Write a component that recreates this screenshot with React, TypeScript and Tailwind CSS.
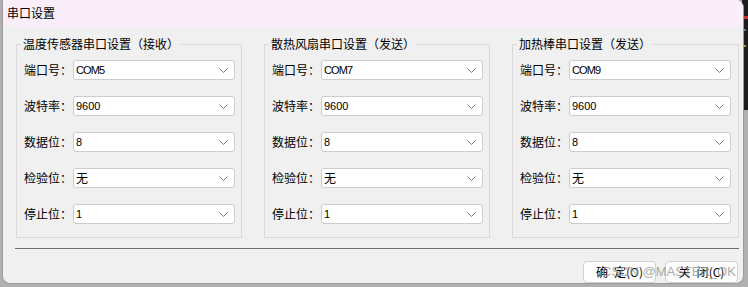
import React from "react";

const FONT = "font-['Microsoft_YaHei_UI','Noto_Sans_CJK_SC',sans-serif]";

type Row = { label: string; value: string; mono?: boolean };

const groups: { title: string; rows: Row[] }[] = [
  {
    title: "温度传感器串口设置（接收）",
    rows: [
      { label: "端口号：", value: "COM5", mono: true },
      { label: "波特率：", value: "9600" },
      { label: "数据位：", value: "8" },
      { label: "检验位：", value: "无" },
      { label: "停止位：", value: "1" },
    ],
  },
  {
    title: "散热风扇串口设置（发送）",
    rows: [
      { label: "端口号：", value: "COM7", mono: true },
      { label: "波特率：", value: "9600" },
      { label: "数据位：", value: "8" },
      { label: "检验位：", value: "无" },
      { label: "停止位：", value: "1" },
    ],
  },
  {
    title: "加热棒串口设置（发送）",
    rows: [
      { label: "端口号：", value: "COM9", mono: true },
      { label: "波特率：", value: "9600" },
      { label: "数据位：", value: "8" },
      { label: "检验位：", value: "无" },
      { label: "停止位：", value: "1" },
    ],
  },
];

function Chevron() {
  return (
    <svg width="9" height="5" viewBox="0 0 9 5" className="shrink-0">
      <polyline points="0.5,0.5 4.5,4.5 8.5,0.5" fill="none" stroke="#7c7c7c" strokeWidth="1" />
    </svg>
  );
}

function Combo({ value, mono }: { value: string; mono?: boolean }) {
  return (
    <div className="flex h-[20px] w-[162px] items-center justify-between rounded-[3px] border border-[#cdcdcd] bg-white pl-[2px] pr-[6px]">
      <span
        className={
          mono
            ? "font-['Liberation_Sans',sans-serif] text-[11px] leading-[18px] tracking-[-0.9px] text-black"
            : value === "无"
            ? `${FONT} text-[12px] leading-[18px] text-black`
            : "font-['Liberation_Sans',sans-serif] text-[11px] leading-[18px] text-black"
        }
      >
        {value}
      </span>
      <Chevron />
    </div>
  );
}

function Group({ title, rows, wide }: { title: string; rows: Row[]; wide?: boolean }) {
  return (
    <fieldset
      className={`${wide ? "w-[227px]" : "w-[226px]"} border border-[#d9d9d9] pl-[7px] pr-[5px] pt-[8px] pb-[13px]`}
    >
      <legend className={`${FONT} -ml-[3px] px-[2px] text-[12px] leading-[16px] text-black`}>{title}</legend>
      <div className="flex flex-col gap-[16px]">
        {rows.map((r) => (
          <div key={r.label} className="flex items-center">
            <span className={`${FONT} w-[49px] text-[12px] leading-[16px] text-black`}>{r.label}</span>
            <Combo value={r.value} mono={r.mono} />
          </div>
        ))}
      </div>
    </fieldset>
  );
}

function Btn({ a, b, k }: { a: string; b: string; k: string }) {
  return (
    <div
      className={`${FONT} flex h-[22px] w-[73px] items-center justify-center rounded-[4px] border border-[#d0d0d0] bg-[#fdfdfd] text-[12px] leading-[16px] text-black`}
    >
      <span className="mr-[6px]">{a}</span>
      <span>{b}</span>
      <span>({k})</span>
    </div>
  );
}

export default function App() {
  return (
    <div className="relative h-[287px] w-[748px] overflow-hidden bg-[#b0b0b0]">
      <div className="absolute right-0 top-0 h-[110px] w-[6px] bg-[#1c1c1c]">
        <div className="mt-[16px] h-[3px] w-[6px] bg-[#c0392b]" />
        <div className="mt-[10px] h-[2px] w-[4px] bg-[#5b7bb5]" />
        <div className="mt-[14px] h-[2px] w-[4px] bg-[#c08a3e]" />
      </div>
      <div className="absolute left-[2px] top-0 flex h-[284px] w-[742px] flex-col overflow-hidden rounded-b-[8px] rounded-tr-[8px] border-b border-l border-r border-[#9c9c9c] bg-[#f0f0f0]">
        <div className="flex h-[26px] shrink-0 items-center bg-[#f9eef9] pl-[4px]">
          <span className={`${FONT} text-[12px] leading-[16px] text-black`}>串口设置</span>
        </div>
        <div className="flex flex-col pl-[13px] pt-[10px]">
          <div className="flex gap-[22px]">
            <Group {...groups[0]} />
            <Group {...groups[1]} />
            <Group {...groups[2]} wide />
          </div>
          <div className="-ml-px mt-[10px] h-px w-[724px] bg-[#6e6e6e]" />
          <div className="mt-[12px] flex justify-end gap-[9px] pr-[5px]">
            <Btn a="确" b="定" k="O" />
            <Btn a="关" b="闭" k="C" />
          </div>
        </div>
      </div>
      <div className="pointer-events-none absolute left-[602px] top-[264px] font-['Liberation_Sans',sans-serif] text-[13px] leading-[16px] text-[#9a9a9a] opacity-80">
        CSDN @MASTER_OK
      </div>
    </div>
  );
}
